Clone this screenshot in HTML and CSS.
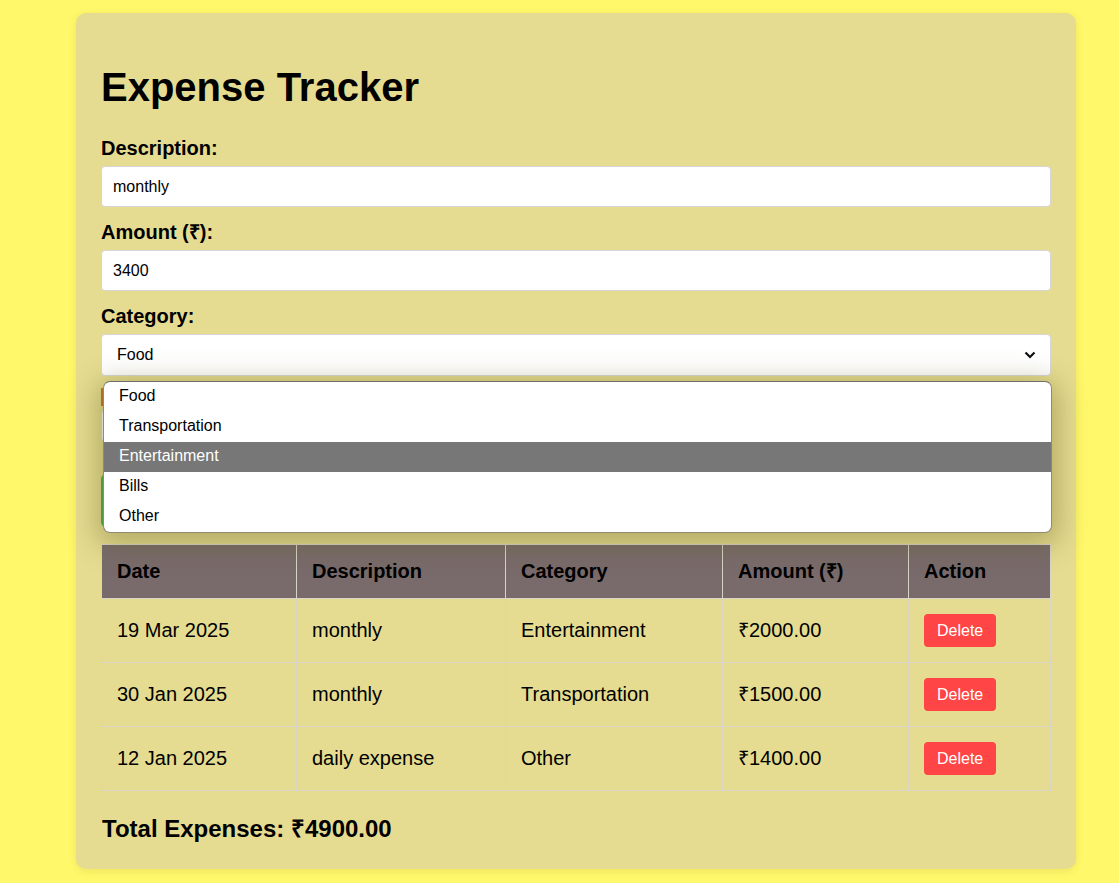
FILE: index.html
```html
<!DOCTYPE html>
<html>
<head>
<meta charset="utf-8">
<title>Expense Tracker</title>
<link rel="stylesheet" href="styles.css">
</head>
<body>
<div class="container">
  <h1 class="title">Expense Tracker</h1>
  <form class="form">
    <label class="label">Description:</label>
    <div class="field">monthly</div>
    <label class="label">Amount (₹):</label>
    <div class="field">3400</div>
    <label class="label">Category:</label>
    <div class="select-wrap">
      <div class="field select">Food
        <svg class="chev" width="12" height="8" viewBox="0 0 12 8"><path d="M1.5 1.5 L6 6 L10.5 1.5" fill="none" stroke="#111" stroke-width="2.2"/></svg>
      </div>
      <ul class="popup">
        <li class="opt">Food</li>
        <li class="opt">Transportation</li>
        <li class="opt active">Entertainment</li>
        <li class="opt">Bills</li>
        <li class="opt">Other</li>
      </ul>
    </div>
    <div class="hidden-row"><span class="date-mark"></span></div>
    <div class="field date"></div>
    <div class="add"></div>
  </form>
  <table class="table">
    <thead>
      <tr><th class="c1">Date</th><th class="c2">Description</th><th class="c3">Category</th><th class="c4">Amount (₹)</th><th class="c5">Action</th></tr>
    </thead>
    <tbody>
      <tr><td>19 Mar 2025</td><td>monthly</td><td>Entertainment</td><td>₹2000.00</td><td><button type="button" class="del">Delete</button></td></tr>
      <tr><td>30 Jan 2025</td><td>monthly</td><td>Transportation</td><td>₹1500.00</td><td><button type="button" class="del">Delete</button></td></tr>
      <tr><td>12 Jan 2025</td><td>daily expense</td><td>Other</td><td>₹1400.00</td><td><button type="button" class="del">Delete</button></td></tr>
    </tbody>
  </table>
  <h3 class="total">Total Expenses: ₹4900.00</h3>
</div>
</body>
</html>
```
FILE: styles.css
```css
html, body { margin: 0; padding: 0; }
body {
  background: #fff86a;
  font-family: "Liberation Sans", Arial, sans-serif;
  color: #000;
  padding: 13px 0 16px 76px;
}
.container {
  width: 950px;
  background: #e5dc91;
  border-radius: 10px;
  padding: 25px;
  box-shadow: 0 2px 8px rgba(0,0,0,0.08);
}
.title {
  font-size: 40px;
  line-height: 46px;
  margin: 26px 0 27px;
  font-weight: bold;
}
.form { display: flex; flex-direction: column; }
.label {
  display: block;
  font-size: 20px;
  line-height: 23px;
  font-weight: bold;
  margin-bottom: 6px;
}
.field {
  box-sizing: border-box;
  height: 41px;
  background: #fff;
  border: 1px solid #d6d6d6;
  border-radius: 4px;
  font-size: 16px;
  line-height: 39px;
  padding: 0 11px;
  margin-bottom: 14px;
}
.select-wrap { position: relative; }
.select {
  height: 42px;
  line-height: 40px;
  padding-left: 15px;
  display: flex;
  justify-content: space-between;
  align-items: center;
  margin-bottom: 0;
}
.chev { margin-right: 3px; }
.popup {
  position: absolute;
  left: 2px;
  top: 47px;
  width: 947px;
  margin: 0;
  padding: 0;
  list-style: none;
  background: #fff;
  border: 1px solid #8f8a70;
  border-top-color: #6e6e6e;
  border-radius: 7px;
  overflow: hidden;
  z-index: 5;
  box-shadow: 0 6px 28px 6px rgba(90, 80, 20, 0.35);
}
.opt {
  height: 30px;
  line-height: 28px;
  font-size: 16px;
  padding-left: 15px;
}
.opt.active { background: #777777; color: #fff; }
.hidden-row { height: 20px; margin-top: 12px; }
.date-mark { display: block; width: 2px; height: 18px; background: #c0762a; }
.date { margin-top: 2px; height: 32px; }
.add {
  width: 180px;
  height: 53px;
  margin-top: 18px;
  margin-bottom: 17px;
  background: #4caf50;
  border-radius: 5px;
}
.table {
  width: 950px;
  border-collapse: collapse;
  font-size: 20px;
}
.table th, .table td {
  border: 1px solid #d8d5c6;
  padding: 15px 15px;
  text-align: left;
  line-height: 23px;
}
.table th {
  background: #796b6b;
  font-weight: bold;
}
.c1 { width: 164px; }
.c2 { width: 178px; }
.c3 { width: 186px; }
.c4 { width: 155px; }
.del {
  background: #ff4545;
  color: #fff;
  border: none;
  border-radius: 4px;
  font-family: inherit;
  font-size: 16px;
  line-height: 20px;
  padding: 7px 13px 6px;
  display: block;
}
.total {
  font-size: 24px;
  line-height: 27px;
  margin: 24px 0 2px 1px;
  font-weight: bold;
}
```
